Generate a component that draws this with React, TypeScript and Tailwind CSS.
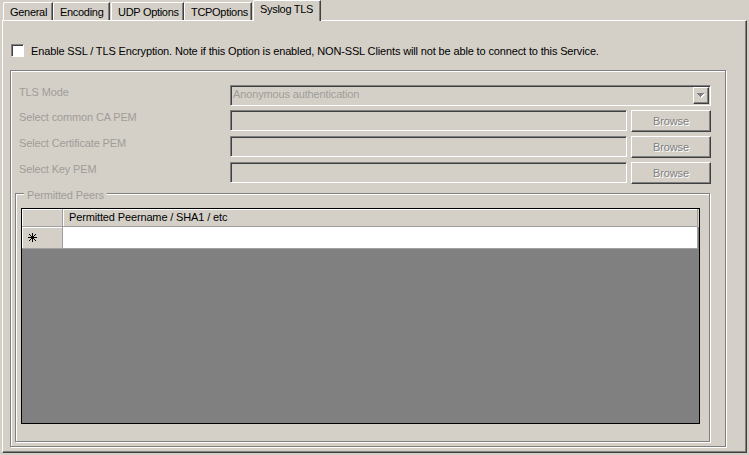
import React from "react";

const tabs = [
  { label: "General", w: "w-[50px]", ml: "ml-0" },
  { label: "Encoding", w: "w-[57px]", ml: "ml-0" },
  { label: "UDP Options", w: "w-[73px]", ml: "ml-[1px]" },
  { label: "TCPOptions", w: "w-[68px]", ml: "ml-0" },
];

const raised =
  "border border-t-white border-l-white border-r-[#404040] border-b-[#404040] shadow-[inset_-1px_-1px_0_#808080]";
const sunken =
  "border border-t-[#808080] border-l-[#808080] border-r-white border-b-white shadow-[inset_1px_1px_0_#404040]";
const etched = "border border-[#808080] shadow-[inset_1px_1px_0_#fff,1px_1px_0_#fff]";

const Tab = ({ label, w, ml }: { label: string; w: string; ml: string }) => (
  <div
    className={`${w} ${ml} h-[18px] pl-[6px] pt-[3px] leading-[13px] tracking-[-0.3px] whitespace-nowrap border-t border-l border-r border-t-white border-l-white border-r-[#404040] shadow-[inset_-1px_0_0_#808080] rounded-tl-[2px]`}
  >
    {label}
  </div>
);

const Row = ({ label }: { label: string }) => (
  <div className="flex items-start mt-[4px]">
    <div className="w-[211px] ml-[8px] pt-[1px] leading-[13px] text-[#a09d98]">{label}</div>
    <div className={`w-[397px] h-[21px] ${sunken}`} />
    <div
      className={`ml-[4px] w-[80px] h-[22px] flex items-center justify-center leading-[13px] text-[#808080] [text-shadow:1px_1px_0_#fff] ${raised}`}
    >
      Browse
    </div>
  </div>
);

const NewRowGlyph = () => (
  <svg width="9" height="9" viewBox="0 0 9 9" shapeRendering="crispEdges">
    <path d="M4 0h1v9H4zM0 4h9v1H0z" fill="#000" />
    <path d="M1 1h1v1H1zM2 2h1v1H2zM3 3h1v1H3zM5 5h1v1H5zM6 6h1v1H6zM7 7h1v1H7zM7 1h1v1H7zM6 2h1v1H6zM5 3h1v1H5zM3 5h1v1H3zM2 6h1v1H2zM1 7h1v1H1z" fill="#000" />
  </svg>
);

export default function App() {
  return (
    <div className="w-[749px] h-[455px] overflow-hidden bg-[#d4d0c8] text-[11px] tracking-[-0.14px] text-black font-['Liberation_Sans',Arial,sans-serif]">
      <div className="relative z-10 h-[20px] flex items-end pl-[3px]">
        {tabs.map((t) => (
          <Tab key={t.label} {...t} />
        ))}
        <div className="ml-[1px] w-[68px] h-[21px] -mb-px pl-[6px] pt-[2px] leading-[13px] tracking-[-0.3px] whitespace-nowrap bg-[#d4d0c8] border-t border-l border-r border-t-white border-l-white border-r-[#404040] shadow-[inset_-1px_0_0_#808080] rounded-tl-[2px]">
          Syslog TLS
        </div>
      </div>

      <div className="ml-[2px] w-[745px] h-[433px] border border-t-white border-l-white border-r-[#404040] border-b-[#404040] shadow-[inset_-1px_-1px_0_#808080]">
        <div className="flex items-start mt-[23px] ml-[8px]">
          <div className={`w-[13px] h-[13px] bg-white ${sunken}`} />
          <span className="ml-[7px] mt-[1px] leading-[13px] whitespace-nowrap">
            Enable SSL / TLS Encryption. Note if this Option is enabled, NON-SSL Clients will not be able to connect to this Service.
          </span>
        </div>

        <div className={`mt-[12px] ml-[7px] w-[716px] h-[377px] ${etched}`}>
          <div className="flex items-start mt-[14px]">
            <div className="w-[211px] ml-[8px] pt-[1px] leading-[13px] text-[#a09d98]">TLS Mode</div>
            <div className={`w-[481px] h-[21px] p-[1px] flex ${sunken}`}>
              <div className="flex-1 pl-[1px] pt-[1px] leading-[13px] text-[#a09d98] whitespace-nowrap">
                Anonymous authentication
              </div>
              <div className={`w-[16px] h-[17px] flex items-center justify-center ${raised}`}>
                <svg width="8" height="5" viewBox="0 0 8 5" shapeRendering="crispEdges">
                  <path d="M1 1h7l-3.5 4z" fill="#fff" />
                  <path d="M0 0h7L3.5 4z" fill="#808080" />
                </svg>
              </div>
            </div>
          </div>
          <Row label="Select common CA PEM" />
          <Row label="Select Certificate PEM" />
          <Row label="Select Key PEM" />

          <div className={`relative mt-[9px] ml-[4px] w-[695px] h-[249px] ${etched}`}>
            <div className="absolute -top-[5px] left-[8px] px-[3px] bg-[#d4d0c8] leading-[13px] text-[#a09d98]">
              Permitted Peers
            </div>
            <div className="mt-[14px] ml-[5px] w-[679px] h-[216px] border border-black bg-[#808080]">
              <div className="flex h-[18px] bg-[#d4d0c8]">
                <div className="w-[41px] h-full border-r border-b border-[#a0a0a0] shadow-[inset_1px_1px_0_#fff]" />
                <div className="w-[635px] h-full pl-[6px] pt-[2px] leading-[13px] whitespace-nowrap border-r border-b border-[#a0a0a0] shadow-[inset_1px_1px_0_#fff]">
                  Permitted Peername / SHA1 / etc
                </div>
              </div>
              <div className="flex h-[22px]">
                <div className="w-[41px] h-full flex items-center pl-[6px] bg-[#d4d0c8] border-r border-b border-[#a0a0a0] shadow-[inset_1px_1px_0_#fff]">
                  <NewRowGlyph />
                </div>
                <div className="w-[635px] h-full bg-white border-r border-b border-[#a0a0a0]" />
              </div>
            </div>
          </div>
        </div>
      </div>
    </div>
  );
}
